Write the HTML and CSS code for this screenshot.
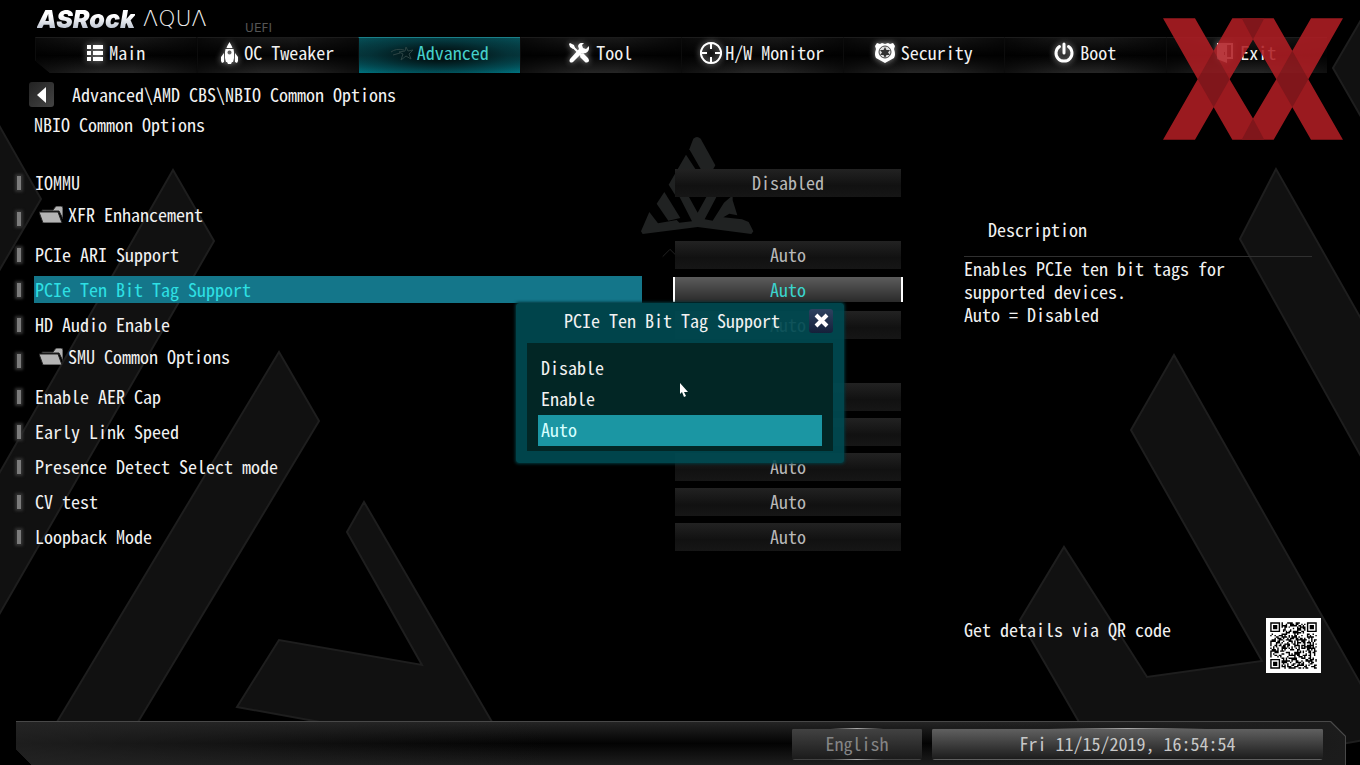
FILE: index.html
```
<!DOCTYPE html>
<html lang="en">
<head>
    <meta charset="UTF-8">
    <meta name="viewport" content="width=device-width, initial-scale=1.0">
    <title>ASRock AQUA UEFI</title>

    <link rel="stylesheet" href="styles.css">

</head>
<body>
<svg class="backdrop" viewBox="0 0 1360 765" preserveAspectRatio="xMidYMid slice" aria-hidden="true">
    <g class="backdrop-shapes">
        <path d="M-20 92L41 199L-4 276"/>
        <path d="M-4 479L173 170L214 241L-4 620"/>
        <path d="M57 722L279 352L319 421L138 722"/>
        <path d="M320 722L237 707L279 640L422 665L347 532L364 502L492 722"/>
        <path d="M1364 15L1333 68L1364 122"/>
        <path d="M1364 462L1240 239L1276 169L1364 324"/>
        <path d="M1079 722L1020 620L1064 547L1147 677L1262 661L1131 430L1174 355L1364 690L1364 740L1330 746"/>
    </g>
    <!-- triangle emblem -->
    <g class="backdrop-emblem" transform="translate(636 132) scale(.3333)">
        <path d="M172 20Q183 10 194 20L238 100L228 118H198L160 52Z"/>
        <path d="M150 68L184 120V190H118L98 158Z"/>
        <path d="M85 180L133 258L97 266L62 215Z"/>
        <path d="M128 190H156L185 242L214 190H244L206 262L230 266L264 212L290 190V205L304 250L280 245L262 256L318 262L338 270L352 298L346 306L185 285L20 306L15 298L40 240L66 274L122 264L130 272L168 268Z"/>
        <path class="backdrop-line" d="M80 374L102 352L124 374"/>
    </g>
</svg>

<header class="header">
    <div class="brand">
        <span class="brand-name">ASRock</span>
        <span class="brand-series">ΛQUΛ</span>
        <span class="brand-uefi">UEFI</span>
    </div>
    <nav class="tabs">
        <a class="tab tab-first" href="#main">
            <svg class="icon" width="16" height="16" viewBox="0 0 16 16"><path d="M0 0h4v4H0zM6 0h10v4H6zM0 6h4v4H0zM6 6h10v4H6zM0 12h4v4H0zM6 12h10v4H6z"/></svg>
            Main
        </a>
        <a class="tab" href="#oc">
            <svg class="icon" width="17" height="22" viewBox="0 0 17 22"><path fill-rule="evenodd" d="M8.500 0C9.500 2 11 4 11.500 6H5.500C6 4 7.500 2 8.500 0zM4.500 7h8L13 10v6l-1 4H5l-1-4v-6zM8.500 8.500a2 2 0 1 0 .01 0zM3 11v9l-2 1-1-2v-4zM14 11l3 4v4l-1 2-2-1zM6 20h5l-1 2H7z"/></svg>
            OC Tweaker
        </a>
        <a class="tab tab-active tab-tight" href="#advanced">
            <svg class="icon icon-star" width="24" height="18" viewBox="0 0 24 18"><path d="M16 3l2 4 5-1-4 4 2 5-5-3-5 4 2-6-4-2 6-1zM1 8q5-4 13-2M3 11l7-2"/></svg>
            Advanced
        </a>
        <a class="tab" href="#tool">
            <svg class="icon" width="21" height="20" viewBox="0 0 21 20"><path class="icon-stroke" d="M3 3l10 10"/><path d="M1 0l4 2 1 3-2 1-3-2-1-3zM12 11l2-1 5 5q2 3 0 4t-3 0l-5-5zM20 3l-3 3-3-1-1-3 2-2q-5-1-6 3l1 3L1 16q-1 2 0 3t3 0l9-9q6 1 7-4z"/></svg>
            Tool
        </a>
        <a class="tab tab-tight" href="#monitor">
            <svg class="icon" width="22" height="22" viewBox="0 0 22 22"><path class="icon-stroke" d="M11 1a10 10 0 1 0 .01 0zM11 2v5M11 15v5M2 11h5M15 11h5"/></svg>
            H/W Monitor
        </a>
        <a class="tab" href="#security">
            <svg class="icon" width="20" height="21" viewBox="0 0 20 21"><path d="M2 1l3 1 2-1 3 1 3-1 2 1 3-1 2 3-1 3q2 6 0 9l-9 5-9-5Q-1 13 1 7L0 4z"/><circle class="icon-cut" cx="10" cy="10" r="6"/><path class="icon-badge" d="M10 5l1.500 3H15l-2 2.500 2 2.500h-3.500L10 16l-1.500-3H5l2-2.500L5 8h3.500z"/></svg>
            Security
        </a>
        <a class="tab" href="#boot">
            <svg class="icon" width="20" height="21" viewBox="0 0 20 21"><path class="icon-stroke icon-bold" d="M10 2v9M5.500 4.500a8 8 0 1 0 9 0"/></svg>
            Boot
        </a>
        <a class="tab" href="#exit">
            <svg class="icon" width="17" height="22" viewBox="0 0 17 22"><path fill-rule="evenodd" d="M0 1h16v16h-6v4L0 17zM10 3v12h4V3zM7 10v3h1v-3z"/></svg>
            Exit
        </a>
    </nav>
</header>

<main class="main">
    <div class="crumbs">
        <button class="back" type="button" aria-label="Back">
            <svg width="10" height="16" viewBox="0 0 10 16"><path d="M9 0v16L0 8z"/></svg>
        </button>
        <span>Advanced\AMD CBS\NBIO Common Options</span>
    </div>
    <h1 class="title">NBIO Common Options</h1>

    <div class="content">
        <div class="options">
            <div class="option">
                <i class="marker"></i>
                <label class="option-label" for="iommu">IOMMU</label>
                <button class="value" id="iommu" type="button">Disabled</button>
            </div>
            <div class="option option-folder">
                <i class="marker"></i>
                <a class="option-label" href="#xfr">
                    <svg class="folder" width="24" height="17" viewBox="0 0 24 17"><path d="M3 4h11l3-4h5q2 0 2 2v11L20 5H3z"/><path d="M0 6h19l4 11H4z"/></svg>
                    XFR Enhancement
                </a>
            </div>
            <div class="option">
                <i class="marker"></i>
                <label class="option-label" for="ari">PCIe ARI Support</label>
                <button class="value" id="ari" type="button">Auto</button>
            </div>
            <div class="option option-selected">
                <i class="marker"></i>
                <label class="option-label" for="tenbit">PCIe Ten Bit Tag Support</label>
                <button class="value" id="tenbit" type="button">Auto</button>
            </div>
            <div class="option">
                <i class="marker"></i>
                <label class="option-label" for="hdaudio">HD Audio Enable</label>
                <button class="value" id="hdaudio" type="button">Auto</button>
            </div>
            <div class="option option-folder">
                <i class="marker"></i>
                <a class="option-label" href="#smu">
                    <svg class="folder" width="24" height="17" viewBox="0 0 24 17"><path d="M3 4h11l3-4h5q2 0 2 2v11L20 5H3z"/><path d="M0 6h19l4 11H4z"/></svg>
                    SMU Common Options
                </a>
            </div>
            <div class="option">
                <i class="marker"></i>
                <label class="option-label" for="aer">Enable AER Cap</label>
                <button class="value" id="aer" type="button"></button>
            </div>
            <div class="option">
                <i class="marker"></i>
                <label class="option-label" for="early">Early Link Speed</label>
                <button class="value" id="early" type="button"></button>
            </div>
            <div class="option">
                <i class="marker"></i>
                <label class="option-label" for="presence">Presence Detect Select mode</label>
                <button class="value" id="presence" type="button">Auto</button>
            </div>
            <div class="option">
                <i class="marker"></i>
                <label class="option-label" for="cv">CV test</label>
                <button class="value" id="cv" type="button">Auto</button>
            </div>
            <div class="option">
                <i class="marker"></i>
                <label class="option-label" for="loopback">Loopback Mode</label>
                <button class="value" id="loopback" type="button">Auto</button>
            </div>
        </div>

        <aside class="side">
            <h2 class="side-title">Description</h2>
            <p class="side-text">Enables PCIe ten bit tags for<br>supported devices.<br>Auto = Disabled</p>
            <div class="side-qr">
                <span>Get details via QR code</span>
                <svg class="qr" viewBox="-3 -3 39 39" role="img" aria-label="QR code"><path id="qrPath"/></svg>
            </div>
        </aside>
    </div>
</main>

<footer class="footer">
    <div class="footer-bar">
        <button class="footer-btn footer-lang" type="button">English</button>
        <button class="footer-btn footer-date" type="button">Fri 11/15/2019, 16:54:54</button>
    </div>
</footer>

<!-- value picker -->
<div class="dialog" role="dialog" aria-labelledby="dialogTitle">
    <div class="dialog-head">
        <h2 class="dialog-title" id="dialogTitle">PCIe Ten Bit Tag Support</h2>
        <button class="dialog-close" type="button" aria-label="Close">
            <svg width="15" height="15" viewBox="0 0 15 15"><path d="M2 2l11 11M13 2L2 13"/></svg>
        </button>
    </div>
    <div class="dialog-list">
        <button class="choice" type="button">Disable</button>
        <button class="choice" type="button">Enable</button>
        <button class="choice choice-active" type="button">Auto</button>
    </div>
    <svg class="cursor" width="9" height="14" viewBox="0 0 9 14"><path d="M0 0v11l2-2 2 5 2-1-2-4h4z"/></svg>
</div>

<svg class="watermark" viewBox="0 0 540 365" aria-hidden="true">
    <path d="M0 0H96L152 98L208 0H332L388 98L444 0H540L436 183L540 365H444L388 267L332 365H208L152 267L96 365H0L104 183ZM270 64L200 183L270 301L340 183Z" fill-rule="evenodd"/>
    <path class="watermark-fold" d="M152 98L200 183L152 267L104 183ZM388 98L436 183L388 267L340 183ZM236 0H304L270 64ZM236 365H304L270 301Z"/>
</svg>

<script src="script.js"></script>
</body>
</html>
```
FILE: styles.css
```
* {
    box-sizing: border-box;
}

body {
    position: relative;
    display: flex;
    flex-direction: column;
    min-height: 100vh;
    margin: 0;
    background: #000;
    color: #f2f2f2;
    overflow-x: hidden;
}

body, button {
    font-family: "Noto Sans Mono CJK SC", "Noto Sans CJK SC", "DejaVu Sans Mono", monospace;
    font-feature-settings: "hwid";
    font-size: 18px;
    line-height: 23px;
}

button {
    padding: 0;
    border: 0;
    color: inherit;
    cursor: pointer;
}

a {
    color: inherit;
    text-decoration: none;
}

h1, h2, p {
    margin: 0;
    font-size: 18px;
    font-weight: normal;
}

/* Background */
.backdrop {
    position: absolute;
    top: 0;
    left: 0;
    z-index: -1;
    width: 100%;
    height: 100%;
}

.backdrop-shapes {
    fill: #111;
    stroke: #1e1e1e;
    stroke-width: 2;
}

.backdrop-emblem {
    fill: #202222;
}

.backdrop-line {
    fill: none;
    stroke: #222;
    stroke-width: 3;
}

/* Header */
.brand {
    display: flex;
    height: 37px;
    padding: 7px 0 0 37px;
}

.brand-name {
    margin-right: 8px;
    background: linear-gradient(#fff 30%, #8f9bb0);
    background-clip: text;
    color: transparent;
    font: italic 900 25px/25px "Inter", sans-serif;
}

.brand-series {
    width: 102px;
    font: 22px/24px "DejaVu Sans", sans-serif;
    font-weight: 300;
}

.brand-uefi {
    color: #555;
    font: 12px/14px "DejaVu Sans", sans-serif;
    padding-top: 14px;
}

.tabs {
    display: grid;
    grid-template-columns: repeat(8, 1fr);
    height: 36px;
    margin: 0 33px 0 35px;
}

.tab {
    display: flex;
    align-items: center;
    justify-content: center;
    gap: 6px;
    padding-bottom: 6px;
    border-top: 1px solid #1c1c1c;
    border-left: 1px solid #0c0c0c;
    background: linear-gradient(90deg, rgba(0, 0, 0, 0.6), transparent 40%, transparent 60%, rgba(0, 0, 0, 0.6)),
        linear-gradient(#181818, #020202 50%, #262626);
}

.tab-tight {
    gap: 3px;
}

.tab-first {
    clip-path: polygon(0 0, 100% 0, 100% 100%, 15px 100%, 0 65%);
}

.tab-active {
    border-top-color: #1b7f88;
    background: radial-gradient(ellipse at center, #021416 20%, rgba(3, 40, 45, 0.6) 60%, transparent 100%),
        linear-gradient(#065058, #063e44 50%, #007481);
    color: #45cfcb;
}

.icon {
    fill: #fff;
    filter: drop-shadow(0 0 3px rgba(255, 255, 255, 0.6));
}

.icon-stroke {
    fill: none;
    stroke: #fff;
    stroke-width: 2;
}

.icon-bold {
    stroke-width: 3;
    stroke-linecap: round;
}

.icon-cut {
    fill: #ddd;
    stroke: #444;
}

.icon-badge {
    fill: #333;
}

.icon-star {
    fill: none;
    stroke: #2c4444;
    filter: none;
}

/* Page body */
.main {
    display: flex;
    flex: 1;
    flex-direction: column;
    padding: 9px 39px 0 13px;
}

.crumbs {
    display: flex;
    align-items: center;
    gap: 18px;
    padding-left: 16px;
}

.back {
    display: flex;
    align-items: center;
    justify-content: center;
    width: 25px;
    height: 25px;
    border-radius: 3px;
    background: linear-gradient(135deg, #222, #444);
    fill: #fff;
}

.title {
    margin: 6px 0 29px;
    padding-left: 21px;
}

.content {
    display: grid;
    flex: 1;
    grid-template-columns: minmax(0, 1fr) 357px;
    gap: 61px;
}

.option {
    display: grid;
    grid-template-columns: 12px 1fr 230px;
    align-items: center;
    height: 35px;
}

.option-folder {
    height: 37px;
}

.marker {
    width: 4px;
    height: 14px;
    margin-left: 4px;
    background: #7c7c7c;
    box-shadow: 0 0 3px 2px #333;
}

.option-label {
    display: flex;
    align-items: center;
    height: 27px;
    margin: 0 31px 0 9px;
    padding-left: 1px;
}

.option-folder .option-label {
    gap: 5px;
    margin-bottom: 8px;
    padding-left: 5px;
}

.folder {
    fill: #b4b4b4;
    stroke: #222;
    stroke-width: 1;
}

.option-selected .option-label {
    background: #14768a;
    color: #2ee0e4;
}

.value {
    height: 28px;
    border: solid transparent;
    border-width: 0 2px;
    background: linear-gradient(#222, #111 60%, #161616) padding-box;
    color: #b8b8b8;
}

.option-selected .value {
    height: 25px;
    border-color: #fff;
    background: linear-gradient(#5c5c5c, #2a2a2a) padding-box;
    color: #3bd3cc;
}

/* Description */
.side {
    display: flex;
    flex-direction: column;
    padding-bottom: 48px;
}

.side-title {
    margin-right: 9px;
    padding: 53px 0 15px 24px;
    border-bottom: 1px solid #303030;
}

.side-qr {
    display: flex;
    justify-content: space-between;
    margin-top: auto;
}

.qr {
    width: 55px;
    height: 55px;
    background: #fff;
}

/* Footer */
.footer {
    height: 44px;
    margin: 0 14px 0 16px;
    padding: 1px 1px 0 0;
    background: #484848;
    clip-path: polygon(0 0, calc(100% - 15px) 0, 100% 15px, 100% 100%, 16px 100%, 0 28px);
}

.footer-bar {
    display: flex;
    align-items: center;
    justify-content: flex-end;
    gap: 10px;
    height: 43px;
    padding-right: 22px;
    background: linear-gradient(90deg, rgba(36, 36, 36, 0.8), transparent 40%, transparent 70%, #1c1c1c),
        linear-gradient(#242424, #030303 50%, #1e1e1e);
    clip-path: polygon(0 0, calc(100% - 15px) 0, 100% 15px, 100% 100%, 0 100%);
}

.footer-btn {
    height: 32px;
    border: solid transparent;
    border-width: 1px 0;
    border-image: linear-gradient(90deg, transparent 30%, #aaa 50%, transparent 70%) 1;
    border-radius: 3px;
}

.footer-lang {
    width: 130px;
    background: linear-gradient(#424242, #1b1b1b);
    color: #858585;
}

.footer-date {
    width: 391px;
    background: linear-gradient(#606060, #1c1c1c);
    color: #c8c8c8;
}

/* Dialog */
.dialog {
    position: absolute;
    top: 50%;
    left: 50%;
    width: 328px;
    padding: 0 11px 12px;
    border-radius: 3px;
    background: rgba(0, 74, 81, 0.92);
    box-shadow: 0 0 3px 1px #02373c;
    transform: translate(-50%, -50%);
}

.dialog-head {
    display: flex;
    align-items: center;
    height: 40px;
    padding-bottom: 4px;
}

.dialog-title {
    flex: 1;
    padding-left: 8px;
    text-align: center;
}

.dialog-close {
    display: flex;
    align-items: center;
    justify-content: center;
    width: 24px;
    height: 24px;
    border-radius: 3px;
    background: linear-gradient(#2d4260, #15203a);
    fill: none;
    stroke: #fff;
    stroke-width: 4;
}

.dialog-list {
    display: flex;
    flex-direction: column;
    padding: 10px 11px 5px;
    background: #022625;
}

.choice {
    height: 31px;
    padding: 0 0 2px 3px;
    background: none;
    text-align: left;
}

.choice-active {
    background: #1b96a3;
    color: #d6ffff;
}

.cursor {
    position: absolute;
    top: 50%;
    left: 50%;
    fill: #fff;
}

/* Publisher mark */
.watermark {
    position: absolute;
    top: 18px;
    right: 17px;
    width: 180px;
    height: 122px;
    fill: #b01e24;
    opacity: 0.88;
    pointer-events: none;
}

.watermark-fold {
    fill: #921a1f;
}
```
FILE: script.js
```
// Fill in the QR modules
const size = 33;
let seed = 1954;
let d = "";

function finder(x, y) {
    for (const [cx, cy] of [[3, 3], [size - 4, 3], [3, size - 4]]) {
        const r = Math.max(Math.abs(x - cx), Math.abs(y - cy));
        if (r <= 4) {
            return r <= 1 || r === 3 ? 1 : 0;
        }
    }
    return -1;
}

for (let y = 0; y < size; y++) {
    for (let x = 0; x < size; x++) {
        seed = (seed * 1103515245 + 12345) % 2147483648;
        const f = finder(x, y);
        if (f === 1 || (f === -1 && seed / 2147483648 > 0.48)) {
            d += `M${x} ${y}h1v1h-1z`;
        }
    }
}

document.getElementById("qrPath").setAttribute("d", d);
```
